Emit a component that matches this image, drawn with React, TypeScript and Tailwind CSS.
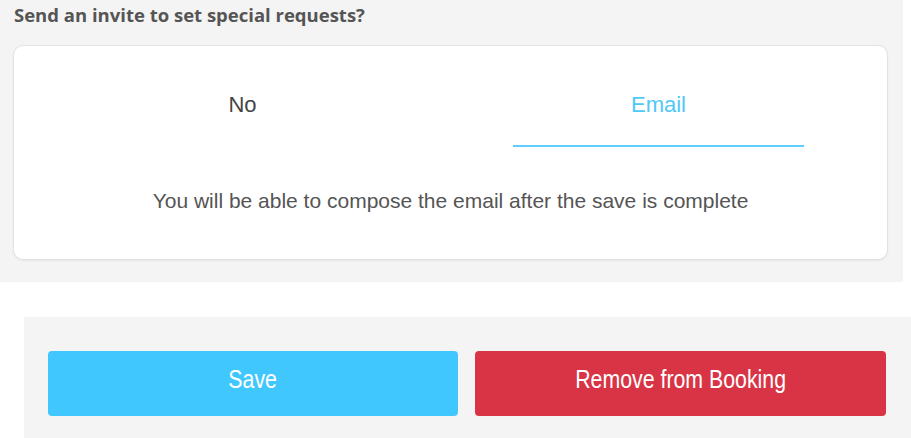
import React from "react";

export default function App() {
  return (
    <div className="w-[911px] h-[438px] bg-white overflow-hidden">
      <div className="w-[903px] h-[282px] bg-[#f4f4f4] pt-[3px]">
        <div className="pl-[14px] text-[18.5px] leading-[24px] font-bold text-[#555555] [font-family:'Open_Sans',sans-serif]">
          Send an invite to set special requests?
        </div>
        <div className="ml-[13px] mt-[18px] w-[875px] h-[215px] bg-white border border-[#e2e2e2] rounded-[10px] shadow-[0_1px_2px_rgba(0,0,0,0.06)] [font-family:'Liberation_Sans',Arial,sans-serif]">
          <div className="flex justify-center gap-[125px] pt-[45px]">
            <div className="w-[291px] text-center text-[22px] leading-[28px] text-[#454545] pb-[28px]">No</div>
            <div className="w-[291px] text-center text-[22px] leading-[28px] text-[#4fc8f8] pb-[26px] border-b-2 border-[#5ccffc]">Email</div>
          </div>
          <div className="mt-[42px] text-center text-[21px] leading-[24px] text-[#555555]">
            You will be able to compose the email after the save is complete
          </div>
        </div>
      </div>
      <div className="ml-[24px] mt-[35px] w-[887px] h-[130px] bg-[#f4f4f4] pt-[34px] pl-[24px] pr-[25px]">
        <div className="flex gap-[17px] [font-family:'Liberation_Sans',Arial,sans-serif]">
          <button className="w-[410px] h-[65px] rounded-[4px] bg-[#40c7fe] text-white text-[26px] leading-[30px] flex items-center justify-center pb-[9px]">
            <span className="inline-block scale-x-[0.82] whitespace-nowrap">Save</span>
          </button>
          <button className="w-[411px] h-[65px] rounded-[4px] bg-[#d93445] text-white text-[26px] leading-[30px] flex items-center justify-center pb-[9px]">
            <span className="inline-block scale-x-[0.82] whitespace-nowrap">Remove from Booking</span>
          </button>
        </div>
      </div>
    </div>
  );
}
